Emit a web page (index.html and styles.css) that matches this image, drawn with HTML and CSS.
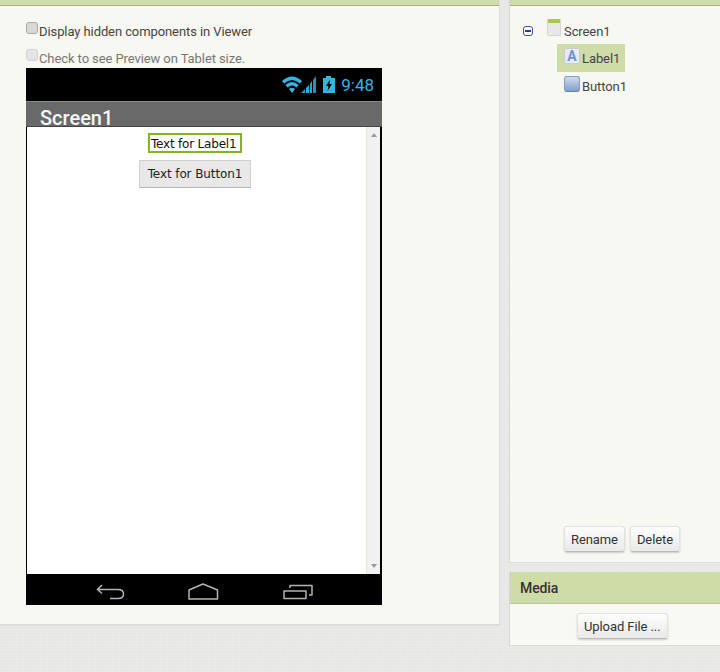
FILE: index.html
```html
<!DOCTYPE html>
<html lang="en">

<head>
    <meta charset="UTF-8">
    <title>Designer</title>
    <link rel="stylesheet" href="styles.css">
</head>

<body>
    <div class="viewer-panel">
        <div class="panel-top"></div>
        <div class="viewer-body">
            <label class="check-row"><span class="check"></span>Display hidden components in Viewer</label>
            <label class="check-row check-off"><span class="check"></span>Check to see Preview on Tablet size.</label>

            <div class="phone">
                <div class="status-bar">
                    <svg class="status-icons" width="54" height="20" viewBox="0 0 54 20">
                        <path d="M0 6 Q10 -3 20 6 L18 8.5 Q10 1.5 2 8.5 Z" fill="#33b5e5" />
                        <path d="M3.5 10 Q10 4 16.5 10 L14.5 12.5 Q10 8.5 5.5 12.5 Z" fill="#33b5e5" />
                        <path d="M7 14 Q10 11.5 13 14 L10 18 Z" fill="#33b5e5" />
                        <path d="M19 18 L23 18 L23 14 Z" fill="#33b5e5" opacity=".85" />
                        <path d="M24 18 L27 18 L27 10 L24 13 Z" fill="#33b5e5" opacity=".95" />
                        <path d="M28 18 L30 18 L30 6 L28 9 Z" fill="#33b5e5" opacity=".9" />
                        <path d="M31 18 L34 18 L34 1 L31 5 Z" fill="#33b5e5" opacity=".8" />
                        <path d="M44 3 V1 H49 V3 H53 V18 H41 V3 Z" fill="#33b5e5" />
                        <path d="M48 4.5 L44 11 H46.5 L45.5 16 L50 9 H47.5 Z" fill="#000" />
                    </svg>
                    <span class="clock">9:48</span>
                </div>
                <div class="title-bar">Screen1</div>
                <div class="screen">
                    <div class="screen-main">
                        <div class="mock-label">Text for Label1</div>
                        <div class="mock-button">Text for Button1</div>
                    </div>
                    <div class="scrollbar">
                        <span class="arrow-up"></span>
                        <span class="arrow-down"></span>
                    </div>
                </div>
                <div class="nav-bar">
                    <svg width="30" height="18" viewBox="0 0 30 18">
                        <path d="M6 2 L1.5 6.5 L6 10.5 M2 6.5 H22 Q27.5 6.5 27.5 11 Q27.5 15.5 22 15.5 H14" fill="none" stroke="#b4b4b4" stroke-width="1.5" />
                    </svg>
                    <svg width="32" height="18" viewBox="0 0 32 18">
                        <path d="M2 7 L16 1 L30.5 7 V16 H2 Z" fill="none" stroke="#b4b4b4" stroke-width="1.5" stroke-linejoin="round" />
                    </svg>
                    <svg class="nav-recent" width="30" height="18" viewBox="0 0 30 18">
                        <path d="M1 8 H23 V15.5 H1 Z M7 5 V2.5 H29 V12 H26" fill="none" stroke="#b4b4b4" stroke-width="1.5" stroke-linejoin="round" />
                    </svg>
                </div>
            </div>
        </div>
    </div>

    <div class="side-column">
        <div class="tree-panel">
            <div class="panel-top"></div>
            <div class="tree-body">
                <div class="tree-root">
                    <span class="collapse"></span>
                    <span class="icon-screen"></span>
                    <span class="tree-text">Screen1</span>
                </div>
                <div class="tree-item tree-selected">
                    <span class="icon-label">A</span>
                    <span class="tree-text">Label1</span>
                </div>
                <div class="tree-item">
                    <span class="icon-button"></span>
                    <span class="tree-text">Button1</span>
                </div>
            </div>
            <div class="tree-actions">
                <button class="btn">Rename</button>
                <button class="btn">Delete</button>
            </div>
        </div>

        <div class="media-panel">
            <div class="media-title">Media</div>
            <div class="media-body">
                <button class="btn">Upload File ...</button>
            </div>
        </div>
    </div>
</body>

</html>
```

FILE: styles.css
```css
* {
    padding: 0;
    margin: 0;
    box-sizing: border-box;
}

html,
body {
    height: 672px;
    overflow: hidden;
}

body {
    display: flex;
    align-items: flex-start;
    gap: 9px;
    font-family: Roboto, "Liberation Sans", sans-serif;
    font-size: 13px;
    letter-spacing: -.09px;
    color: #333333;
    background-color: #e8e8e6;
    background-image:
        repeating-linear-gradient(0deg, rgba(255, 255, 255, .12) 0 1px, transparent 1px 3px),
        repeating-linear-gradient(90deg, rgba(0, 0, 0, .012) 0 1px, transparent 1px 3px);
}

.panel-top {
    height: 6px;
    background: #cfdca8;
    border-bottom: 1px solid #a8ad93;
}

.viewer-panel {
    width: 500px;
    height: 626px;
    background: #f7f8f2;
    border-right: 1px solid #dddddd;
    border-bottom: 2px solid #dddddd;
}

.viewer-body {
    padding: 16px 0 0 26px;
}

.check-row {
    display: flex;
    height: 27px;
    line-height: 19px;
    color: #444444;
}

.check-off {
    height: 19px;
    color: #777777;
}

.check {
    width: 12px;
    height: 12px;
    margin-right: 1px;
    background: #d9d9d9;
    border: 1px solid #a8a8a8;
    border-radius: 3px;
}

.check-off .check {
    background: #e4e4e4;
    border-color: #d4d4d4;
}

.phone {
    width: 356px;
    height: 537px;
    display: flex;
    flex-direction: column;
    background: #000000;
}

.status-bar {
    height: 33px;
    flex-shrink: 0;
    display: flex;
    justify-content: flex-end;
    align-items: center;
    padding-right: 8px;
    gap: 5px;
}

.clock {
    font-size: 17px;
    letter-spacing: 0;
    color: #33b5e5;
}

.title-bar {
    height: 26px;
    flex-shrink: 0;
    padding: 9px 0 0 14px;
    font-size: 20px;
    font-weight: 500;
    line-height: 14px;
    letter-spacing: 0;
    color: #f5f5f5;
    background: #696969;
    border-top: 1px solid #888888;
    border-bottom: 1px solid #444444;
}

.screen {
    flex: 1;
    display: flex;
    margin: 0 2px 0 1px;
    background: #ffffff;
}

.screen-main {
    flex: 1;
    display: flex;
    flex-direction: column;
    align-items: center;
    padding: 6px 3px 0 0;
}

.mock-label {
    width: 94px;
    height: 20px;
    padding-left: 1px;
    border: 2px solid #84b51d;
    font-family: "DejaVu Sans", sans-serif;
    font-size: 12px;
    line-height: 18px;
    letter-spacing: -.2px;
    white-space: nowrap;
    color: #111111;
}

.mock-button {
    width: 112px;
    height: 28px;
    margin-top: 7px;
    border: 1px solid #cfcfcf;
    border-bottom-color: #b5b5b5;
    background: #e8e8e8;
    font-family: "DejaVu Sans", sans-serif;
    font-size: 12px;
    line-height: 26px;
    letter-spacing: -.1px;
    text-align: center;
    color: #222222;
}

.scrollbar {
    position: relative;
    width: 14px;
    background: #f1f1f1;
    border-left: 1px solid #e4e8d0;
}

.arrow-up,
.arrow-down {
    position: absolute;
    left: 4px;
    width: 0;
    height: 0;
    border-left: 3px solid transparent;
    border-right: 3px solid transparent;
}

.arrow-up {
    top: 6px;
    border-bottom: 4px solid #9a9a9a;
}

.arrow-down {
    bottom: 6px;
    border-top: 4px solid #9a9a9a;
}

.nav-bar {
    height: 31px;
    flex-shrink: 0;
    display: flex;
    align-items: flex-start;
    gap: 61px;
    padding: 9px 0 0 70px;
}

.nav-recent {
    margin-left: 3px;
}

.side-column {
    width: 211px;
    display: flex;
    flex-direction: column;
    gap: 9px;
}

.tree-panel {
    height: 563px;
    display: flex;
    flex-direction: column;
    background: #f7f8f2;
    border-left: 1px solid #d6d6d6;
    border-bottom: 1px solid #dddddd;
}

.tree-body {
    flex: 1;
    padding: 13px 0 0 13px;
}

.tree-root {
    display: flex;
    align-items: center;
    height: 24px;
}

.collapse {
    width: 10px;
    height: 10px;
    position: relative;
    margin-right: 14px;
    border: 1px solid #3b4ba0;
    border-radius: 3px;
    background: #ffffff;
}

.collapse::after {
    content: "";
    position: absolute;
    left: 1px;
    top: 3px;
    width: 6px;
    height: 2px;
    background: #2b3a90;
}

.icon-screen {
    width: 14px;
    height: 17px;
    margin: -8px 3px 0 0;
    border: 1px solid #d5d5d5;
    border-top: 4px solid #a8c850;
    border-radius: 2px;
    background: #e8e8e8;
}

.tree-text {
    color: #444444;
}

.tree-item {
    display: flex;
    align-items: center;
    width: 68px;
    height: 28px;
    margin-left: 34px;
    padding-left: 7px;
    gap: 2px;
}

.tree-selected {
    margin-top: 1px;
    background: #cfdca8;
}

.icon-label {
    flex-shrink: 0;
    width: 16px;
    height: 16px;
    margin-top: -4px;
    border: 1px solid #c8ccd6;
    border-radius: 2px;
    background: #e6ebf6;
    font-size: 14px;
    font-weight: bold;
    line-height: 14px;
    text-align: center;
    color: #6d92cf;
}

.icon-button {
    flex-shrink: 0;
    width: 16px;
    height: 16px;
    margin-top: -4px;
    border: 1px solid #8c9cb8;
    border-bottom-color: #6f7f9c;
    border-radius: 3px;
    background: linear-gradient(#cfdcf0, #7f9fcc);
}

.tree-actions {
    display: flex;
    justify-content: flex-start;
    gap: 5px;
    padding: 0 0 10px 54px;
}

.btn {
    height: 26px;
    padding: 0 6px;
    border: 1px solid #e2e2e2;
    border-bottom-color: #bbbbbb;
    border-radius: 3px;
    background: linear-gradient(#fdfdfd, #e9e9e9);
    box-shadow: 0 1px 2px rgba(0, 0, 0, .18);
    font-family: Roboto, "Liberation Sans", sans-serif;
    font-size: 13px;
    letter-spacing: -.09px;
    color: #333333;
}

.media-panel {
    height: 74px;
    background: #f9f9f4;
    border-left: 1px solid #d6d6d6;
    border-bottom: 1px solid #dddddd;
}

.media-title {
    height: 32px;
    padding-left: 10px;
    font-size: 14px;
    font-weight: 500;
    line-height: 32px;
    color: #333333;
    background: #cfdca8;
    border-bottom: 1px solid #b9c49a;
}

.media-body {
    padding: 9px 0 0 67px;
}
```
